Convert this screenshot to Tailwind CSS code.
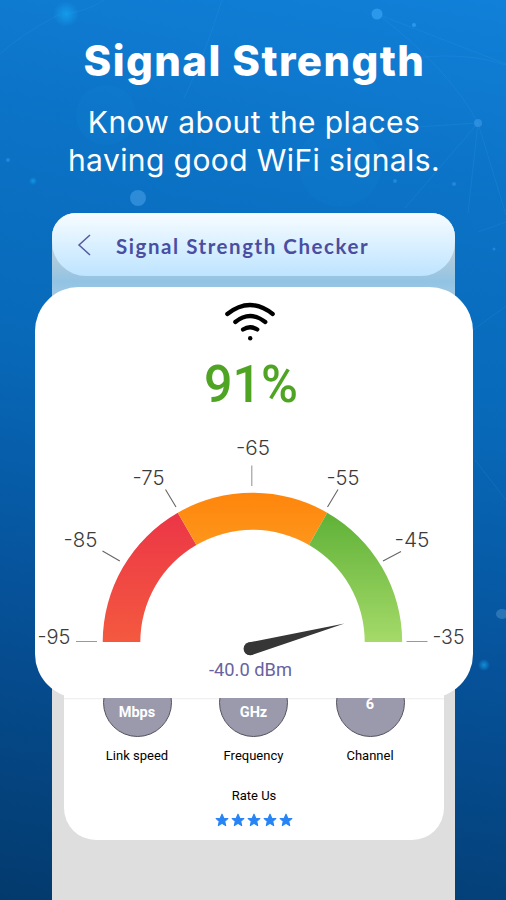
<!DOCTYPE html>
<html lang="en">
<head>
    <meta charset="UTF-8">
    <title>Signal Strength</title>
    <script src="https://cdn.jsdelivr.net/npm/@tailwindcss/browser@4"></script>
</head>
<body class="w-[506px] h-[900px] overflow-hidden relative bg-linear-[190deg,#1180d8_0%,#0b72c5_22%,#0869b9_43%,#06529a_68%,#033a6d_100%] font-['Inter',sans-serif]">

    <!-- backdrop network -->
    <svg class="absolute inset-0" width="506" height="900" viewBox="0 0 506 900" fill="none">
        <defs>
            <radialGradient id="glow">
                <stop offset="0" stop-color="#16a8f4" stop-opacity=".7"/>
                <stop offset="1" stop-color="#16a8f4" stop-opacity="0"/>
            </radialGradient>
        </defs>
        <circle cx="66" cy="14" r="13" fill="url(#glow)"/>
        <circle cx="377" cy="14" r="5.5" fill="#2b98ec"/>
        <circle cx="414" cy="25" r="2" fill="#2b98ec"/>
        <circle cx="478" cy="123" r="4" fill="#2b8cdc"/>
        <circle cx="138" cy="198" r="8" fill="#2d8bd8"/>
        <circle cx="33" cy="181" r="4" fill="url(#glow)"/>
        <circle cx="8" cy="160" r="2" fill="#2486d6"/>
        <circle cx="395" cy="181" r="2" fill="#2486d6"/>
        <circle cx="454" cy="184" r="2" fill="#2486d6"/>
        <circle cx="494" cy="249" r="1.5" fill="#2486d6"/>
        <ellipse cx="502" cy="614" rx="6" ry="5" fill="#2a75b5"/>
        <circle cx="484" cy="665" r="6" fill="url(#glow)"/>
        <g stroke="#3aa5f0" stroke-opacity=".16">
            <path d="M377 14 506 64M380 16 Q450 70 478 123M478 123 405 208M478 123 506 215M478 123 468 213M478 123 370 130M400 60Q460 50 506 65"/>
            <path d="M222 0Q205 55 184 98M60 14Q20 35 0 54M66 14Q90 10 104 0M478 232 506 222M473 330 506 306M475 460 506 500"/>
        </g>
        <circle cx="340" cy="165" r="42" fill="#1c8fdd" fill-opacity=".12"/>
        <circle cx="106" cy="115" r="30" fill="#1c8fdd" fill-opacity=".12"/>
    </svg>

    <div class="relative h-[213px] pt-[35px] text-white text-center whitespace-nowrap">
        <h1 class="text-[42px] leading-[52px] font-extrabold tracking-[1.4px] pl-[3px]">Signal Strength</h1>
        <p class="mt-[17px] text-[30px] leading-[37.5px] tracking-[0.4px] pl-[2px]">Know about the places<br>having good WiFi signals.</p>
    </div>

    <!-- phone screen -->
    <div class="relative ml-[52px] w-[403px] h-[687px] rounded-t-[24px] bg-[#dedede]">
        <div class="h-[106px] rounded-t-[24px] bg-linear-to-b from-[#b9cedb] from-35% via-[#92c3e3] via-65% to-[#b5d3e6]">
            <header class="h-[63px] flex items-center rounded-t-[24px] rounded-b-[34px] bg-linear-to-b from-[#f7fcff] to-[#bde4ff]">
                <svg class="ml-[25px]" width="16" height="24" viewBox="0 0 16 24" fill="none" stroke="#5559a0" stroke-width="1.5"><path d="M13 2 2 12 13 22"/></svg>
                <h2 class="ml-[23px] mt-[3px] font-['Lato',sans-serif] font-bold text-[20.5px] tracking-[1.55px] text-[#4a4ea1] whitespace-nowrap">Signal Strength Checker</h2>
            </header>
        </div>

        <!-- gauge card -->
        <section class="relative z-10 -mt-[32px] -ml-[17px] w-[438px] h-[411px] rounded-[44px] bg-white">
            <svg width="438" height="411" viewBox="35 287 438 411">
                <defs>
                    <linearGradient id="red" x1="0" y1="0" x2="0" y2="1"><stop stop-color="#ec3647"/><stop offset="1" stop-color="#f4593f"/></linearGradient>
                    <linearGradient id="orange" x1="0" y1="0" x2="0" y2="1"><stop stop-color="#ff850c"/><stop offset="1" stop-color="#fd961b"/></linearGradient>
                    <linearGradient id="green" x1="0" y1="0" x2="0" y2="1"><stop stop-color="#5fb137"/><stop offset="1" stop-color="#a5da69"/></linearGradient>
                </defs>
                <g fill="none" stroke="#000" stroke-width="4.2" stroke-linecap="round">
                    <path d="M227.3 314Q250 296 272.7 314"/>
                    <path d="M235.3 322Q250 310 265.3 322"/>
                    <path d="M243 329.5Q250 325 257.3 329.5"/>
                </g>
                <circle cx="250.2" cy="338.2" r="2.2"/>
                <text x="204" y="402" textLength="94" lengthAdjust="spacingAndGlyphs" class="font-['Roboto',sans-serif] text-[51px] font-medium fill-[#4fa523]">91%</text>

                <path fill="url(#red)" d="M102.7 642A149.6 149.6 0 0 1 177.8 512.7L196.4 545A112 112 0 0 0 140.3 642Z"/>
                <path fill="url(#orange)" d="M177.8 512.7A149.6 149.6 0 0 1 327.2 512.7L309 545A112 112 0 0 0 196.4 545Z"/>
                <path fill="url(#green)" d="M327.2 512.7A149.6 149.6 0 0 1 402.2 642H364.7A112 112 0 0 0 309 545Z"/>

                <g stroke="#666" stroke-width="1.1">
                    <path d="M102.5 551 119.8 561M165.5 489.5 176 507M338 489.5 327.5 507M401 551.5 383 561"/>
                    <path stroke="#999" d="M76 641.5H97M406.5 641.5H427.5M251.8 465.5V486"/>
                </g>
                <g class="font-['Inter',sans-serif] text-[20px] font-light fill-[#3c3c3c]">
                    <text x="37.5" y="644" textLength="33" lengthAdjust="spacingAndGlyphs">-95</text>
                    <text x="63.5" y="547" textLength="34" lengthAdjust="spacingAndGlyphs">-85</text>
                    <text x="132.5" y="485" textLength="32" lengthAdjust="spacingAndGlyphs">-75</text>
                    <text x="236" y="455" textLength="34" lengthAdjust="spacingAndGlyphs">-65</text>
                    <text x="326.5" y="485" textLength="33" lengthAdjust="spacingAndGlyphs">-55</text>
                    <text x="394.5" y="547" textLength="35" lengthAdjust="spacingAndGlyphs">-45</text>
                    <text x="432.5" y="644" textLength="32" lengthAdjust="spacingAndGlyphs">-35</text>
                </g>

                <path fill="#363636" d="M344.5 623.5 248.5 642.5A6.4 6.4 0 0 0 251.8 655Z"/>
                <circle cx="250.2" cy="648.7" r="6.4" fill="#363636"/>
                <text x="209" y="675.5" textLength="83" lengthAdjust="spacingAndGlyphs" class="font-['Roboto',sans-serif] text-[17.5px] fill-[#6863a0]">-40.0 dBm</text>
            </svg>
        </section>

        <!-- connection details, tucked under the gauge -->
        <section class="-mt-[30px] ml-[12px] w-[380px] h-[172px] rounded-b-[32px] bg-white text-black font-['Roboto',sans-serif] text-center">
            <div class="flex pl-[15px] gap-[0.5px] bg-linear-to-b from-transparent from-[30px] via-[#ececec] via-[30px] to-transparent to-[32px]">
                <div class="w-[116px]">
                    <div class="mx-auto w-[69px] h-[69px] rounded-full border border-[#55535f] bg-[#9b9aad] pt-[15px] text-[14.5px] leading-[19px] font-bold text-white">72<br>Mbps</div>
                    <p class="mt-[9px] text-[13px] leading-5">Link speed</p>
                </div>
                <div class="w-[116px]">
                    <div class="mx-auto w-[69px] h-[69px] rounded-full border border-[#55535f] bg-[#9b9aad] pt-[15px] text-[14.5px] leading-[19px] font-bold text-white">2.4<br>GHz</div>
                    <p class="mt-[9px] text-[13px] leading-5">Frequency</p>
                </div>
                <div class="w-[116px]">
                    <div class="mx-auto w-[69px] h-[69px] rounded-full border border-[#55535f] bg-[#9b9aad] pt-[26px] text-[14.5px] leading-[19px] font-bold text-white">6</div>
                    <p class="mt-[9px] text-[13px] leading-5">Channel</p>
                </div>
            </div>
            <p class="mt-[20px] text-[13px] leading-5">Rate Us</p>
            <div class="mt-[7px] flex justify-center gap-[2px]">
                <svg class="w-[14px] h-[14px]" viewBox="0 0 24 24" fill="#2684f6" stroke="#2684f6" stroke-width="2" stroke-linejoin="round"><path d="m12 2 3 7 7 .6-5.4 4.7 1.7 7.2L12 17.7l-6.3 3.8 1.7-7.2L2 9.6 9 9z"/></svg>
                <svg class="w-[14px] h-[14px]" viewBox="0 0 24 24" fill="#2684f6" stroke="#2684f6" stroke-width="2" stroke-linejoin="round"><path d="m12 2 3 7 7 .6-5.4 4.7 1.7 7.2L12 17.7l-6.3 3.8 1.7-7.2L2 9.6 9 9z"/></svg>
                <svg class="w-[14px] h-[14px]" viewBox="0 0 24 24" fill="#2684f6" stroke="#2684f6" stroke-width="2" stroke-linejoin="round"><path d="m12 2 3 7 7 .6-5.4 4.7 1.7 7.2L12 17.7l-6.3 3.8 1.7-7.2L2 9.6 9 9z"/></svg>
                <svg class="w-[14px] h-[14px]" viewBox="0 0 24 24" fill="#2684f6" stroke="#2684f6" stroke-width="2" stroke-linejoin="round"><path d="m12 2 3 7 7 .6-5.4 4.7 1.7 7.2L12 17.7l-6.3 3.8 1.7-7.2L2 9.6 9 9z"/></svg>
                <svg class="w-[14px] h-[14px]" viewBox="0 0 24 24" fill="#2684f6" stroke="#2684f6" stroke-width="2" stroke-linejoin="round"><path d="m12 2 3 7 7 .6-5.4 4.7 1.7 7.2L12 17.7l-6.3 3.8 1.7-7.2L2 9.6 9 9z"/></svg>
            </div>
        </section>
    </div>
</body>
</html>
